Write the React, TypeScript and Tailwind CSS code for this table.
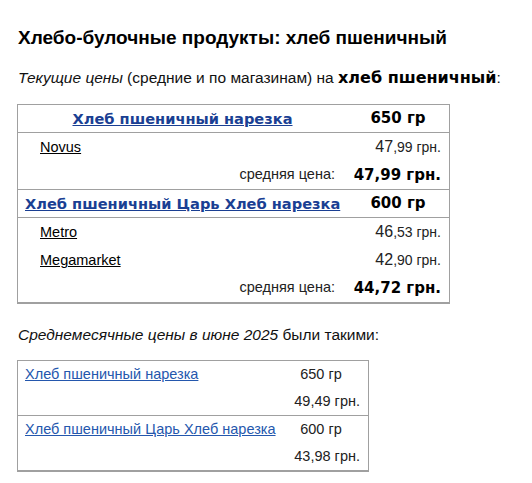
import React from "react";

const arial = { fontFamily: '"Liberation Sans", Arial, sans-serif' };
const verd = { fontFamily: '"DejaVu Sans", Verdana, sans-serif' };

function Price({ a, b }: { a: string; b: string }) {
  return (
    <span className="whitespace-nowrap text-[#222]">
      <span className="text-[16px]">{a}</span>
      <span className="text-[14px]">{b}</span>
    </span>
  );
}

function Header({ name, weight, center }: { name: string; weight: string; center?: boolean }) {
  return (
    <div className="flex h-[28px] items-center border-b border-[#a0a0a0]">
      <div className={`w-[329px] whitespace-nowrap ${center ? "text-center" : "pl-[7px]"}`}>
        <a href="#" className="text-[14.6px] font-bold text-[#1a3f93] underline" style={verd}>
          {name}
        </a>
      </div>
      <div className="flex-1 text-center text-[15px] font-bold text-black" style={verd}>
        {weight}
      </div>
    </div>
  );
}

function Store({ name, a, b }: { name: string; a: string; b: string }) {
  return (
    <div className="flex h-[28px] items-center">
      <div className="w-[329px] pl-[22px]">
        <a href="#" className="text-[14.5px] text-black underline">
          {name}
        </a>
      </div>
      <div className="flex-1 pr-[8px] text-right">
        <Price a={a} b={b} />
      </div>
    </div>
  );
}

function Avg({ value }: { value: string }) {
  return (
    <div className="flex h-[28px] items-center">
      <div className="w-[329px] pr-[12px] text-right text-[14.5px] text-[#222]">средняя цена:</div>
      <div className="flex-1 pr-[8px] text-right text-[15px] font-bold text-black" style={verd}>
        {value}
      </div>
    </div>
  );
}

function Row2({ name, weight, price }: { name: string; weight: string; price: string }) {
  return (
    <div className="flex">
      <div className="flex h-[27px] w-[268px] items-center whitespace-nowrap pl-[7px]">
        <a href="#" className="text-[14.5px] text-[#2457ad] underline">
          {name}
        </a>
      </div>
      <div className="flex flex-1 flex-col">
        <div className="flex h-[27px] items-center justify-center pr-[12px] text-[14.5px] text-[#222]">{weight}</div>
        <div className="flex h-[27px] items-center justify-end pr-[8px] text-[14.5px] text-[#222]">{price}</div>
      </div>
    </div>
  );
}

export default function App() {
  return (
    <div className="min-h-[483px] bg-white pl-[17px] pt-[26px] text-[#111]" style={arial}>
      <div className="ml-[1px] text-[19px] font-bold leading-[24px] text-black">
        Хлебо-булочные продукты: хлеб пшеничный
      </div>
      <div className="ml-[1px] mt-[18px] text-[15.5px] leading-[20px]">
        <i>Текущие цены</i> (средние и по магазинам) на{" "}
        <b className="text-[16px] text-black" style={verd}>
          хлеб пшеничный
        </b>
        :
      </div>
      <div className="mt-[16px] w-[433px] border border-b-2 border-[#a0a0a0]">
        <Header name="Хлеб пшеничный нарезка" weight="650 гр" center />
        <Store name="Novus" a="47" b=",99 грн." />
        <Avg value="47,99 грн." />
        <div className="border-t border-[#a0a0a0]">
          <Header name="Хлеб пшеничный Царь Хлеб нарезка" weight="600 гр" />
        </div>
        <Store name="Metro" a="46" b=",53 грн." />
        <Store name="Megamarket" a="42" b=",90 грн." />
        <Avg value="44,72 грн." />
      </div>
      <div className="ml-[1px] mt-[21px] text-[15.5px] leading-[20px]">
        <i>Среднемесячные цены в июне 2025</i> были такими:
      </div>
      <div className="mt-[15px] w-[352px] border border-b-2 border-[#a0a0a0]">
        <Row2 name="Хлеб пшеничный нарезка" weight="650 гр" price="49,49 грн." />
        <div className="border-t border-[#a0a0a0]">
          <Row2 name="Хлеб пшеничный Царь Хлеб нарезка" weight="600 гр" price="43,98 грн." />
        </div>
      </div>
    </div>
  );
}
